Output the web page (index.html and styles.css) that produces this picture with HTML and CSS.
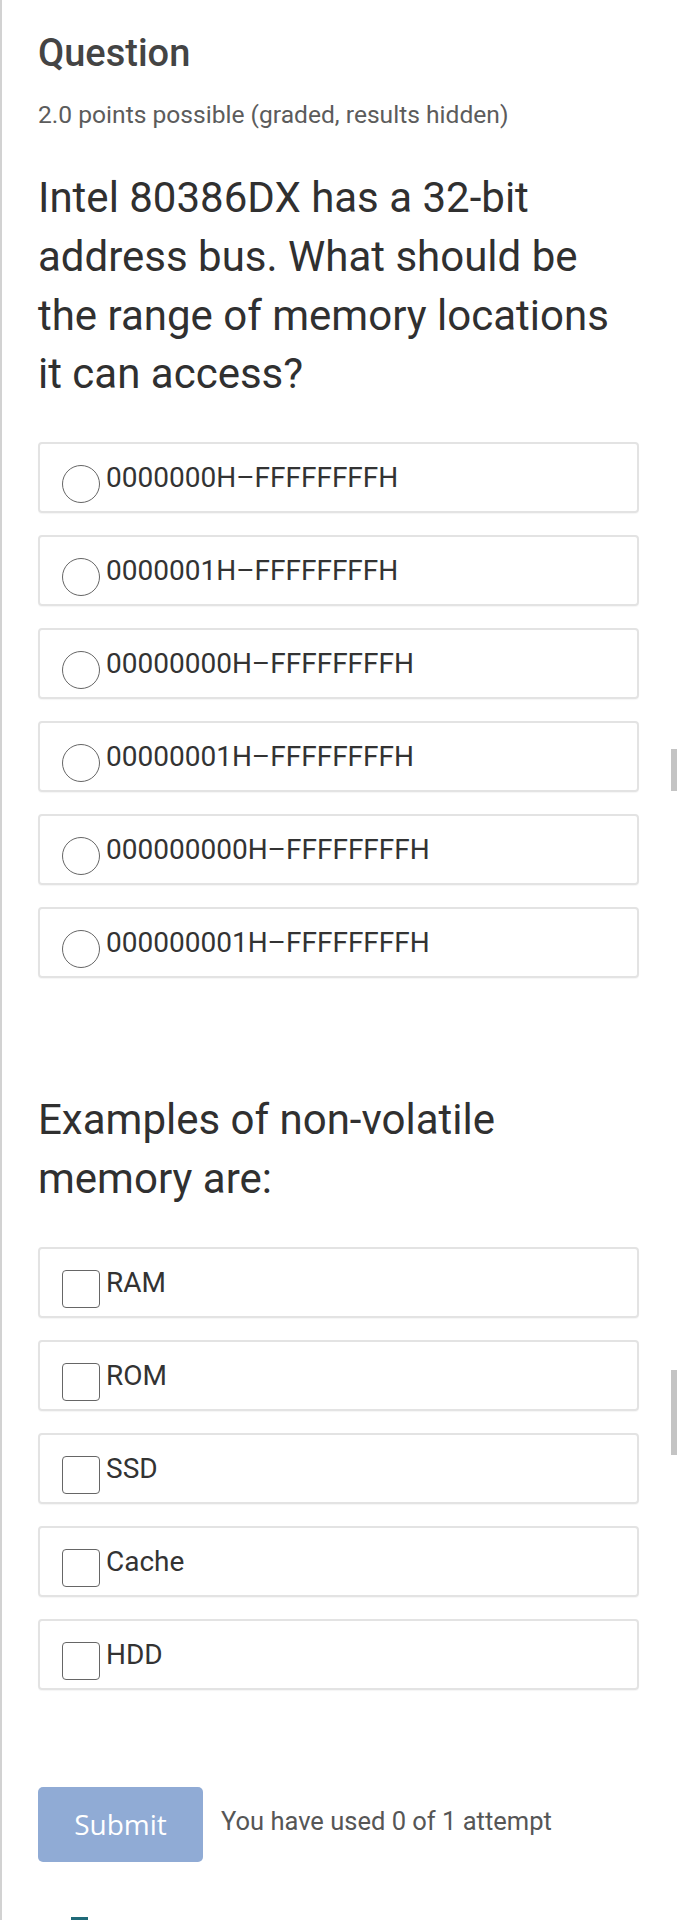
FILE: index.html
```html
<!DOCTYPE html>
<html lang="en">
<head>
<meta charset="utf-8">
<title>Question</title>
<link rel="stylesheet" href="styles.css">
</head>
<body>
<div class="page">
  <h2 class="title">Question</h2>
  <div class="points">2.0 points possible (graded, results hidden)</div>

  <p class="prompt">Intel 80386DX has a 32-bit address bus. What should be the range of memory locations it can access?</p>
  <div class="choices">
    <label class="choice"><span class="radio"></span><span class="text">0000000H–FFFFFFFFH</span></label>
    <label class="choice"><span class="radio"></span><span class="text">0000001H–FFFFFFFFH</span></label>
    <label class="choice"><span class="radio"></span><span class="text">00000000H–FFFFFFFFH</span></label>
    <label class="choice"><span class="radio"></span><span class="text">00000001H–FFFFFFFFH</span></label>
    <label class="choice"><span class="radio"></span><span class="text">000000000H–FFFFFFFFH</span></label>
    <label class="choice"><span class="radio"></span><span class="text">000000001H–FFFFFFFFH</span></label>
  </div>

  <p class="prompt prompt-second">Examples of non-volatile memory are:</p>
  <div class="choices">
    <label class="choice"><span class="check"></span><span class="text">RAM</span></label>
    <label class="choice"><span class="check"></span><span class="text">ROM</span></label>
    <label class="choice"><span class="check"></span><span class="text">SSD</span></label>
    <label class="choice"><span class="check"></span><span class="text">Cache</span></label>
    <label class="choice"><span class="check"></span><span class="text">HDD</span></label>
  </div>

  <div class="actions">
    <button class="submit" type="button">Submit</button>
    <span class="attempts">You have used 0 of 1 attempt</span>
  </div>
  <div class="next-mark"></div>
</div>
<div class="thumb thumb-one"></div>
<div class="thumb thumb-two"></div>
</body>
</html>
```

FILE: styles.css
```css
html, body {
  margin: 0;
  padding: 0;
  background: #ffffff;
}

body {
  position: relative;
  font-family: Roboto, "Liberation Sans", Arial, sans-serif;
  color: #333333;
  overflow: hidden;
}

.page {
  border-left: 2px solid #d2d2d2;
  padding: 31px 38px 0 36px;
  min-height: 1920px;
  box-sizing: border-box;
}

.title {
  margin: 0;
  font-size: 38px;
  line-height: 44px;
  font-weight: 500;
  color: #444444;
}

.points {
  margin-top: 26px;
  font-size: 24.6px;
  line-height: 28px;
  color: #5c5c5c;
}

.prompt {
  margin: 40px 0 0 0;
  font-size: 42px;
  line-height: 58.8px;
  color: #303030;
}

.prompt-second {
  margin-top: 113px;
}

.choices {
  margin-top: 38px;
  display: flex;
  flex-direction: column;
  gap: 22px;
}

.choice {
  display: flex;
  align-items: flex-start;
  gap: 6px;
  border: 2px solid #e3e3e3;
  border-radius: 4px;
  padding: 18px 22px 8px 22px;
  box-shadow: 0 1px 1px rgba(0, 0, 0, 0.04);
}

.radio,
.check {
  flex: none;
  width: 38px;
  height: 38px;
  margin-top: 3px;
  box-sizing: border-box;
  border: 1.5px solid #666666;
  background: #ffffff;
}

.radio {
  border-radius: 50%;
}

.check {
  border-radius: 4px;
}

.text {
  font-size: 28px;
  line-height: 32px;
  color: #333333;
}

.actions {
  margin-top: 97px;
  display: flex;
  align-items: center;
}

.submit {
  width: 165px;
  height: 75px;
  border: none;
  border-radius: 5px;
  background: #90abd5;
  color: #ffffff;
  font-family: "Open Sans", "Liberation Sans", sans-serif;
  font-size: 28px;
  padding: 0;
}

.attempts {
  margin-left: 18px;
  padding-bottom: 6px;
  font-size: 25.5px;
  color: #565656;
}

.next-mark {
  margin: 55px 0 0 33px;
  width: 17px;
  height: 10px;
  background: #1f6a78;
}

.thumb {
  position: absolute;
  right: 0;
  width: 6px;
  background: #c4c4c4;
}

.thumb-one {
  top: 749px;
  height: 42px;
}

.thumb-two {
  top: 1370px;
  height: 85px;
}
```
